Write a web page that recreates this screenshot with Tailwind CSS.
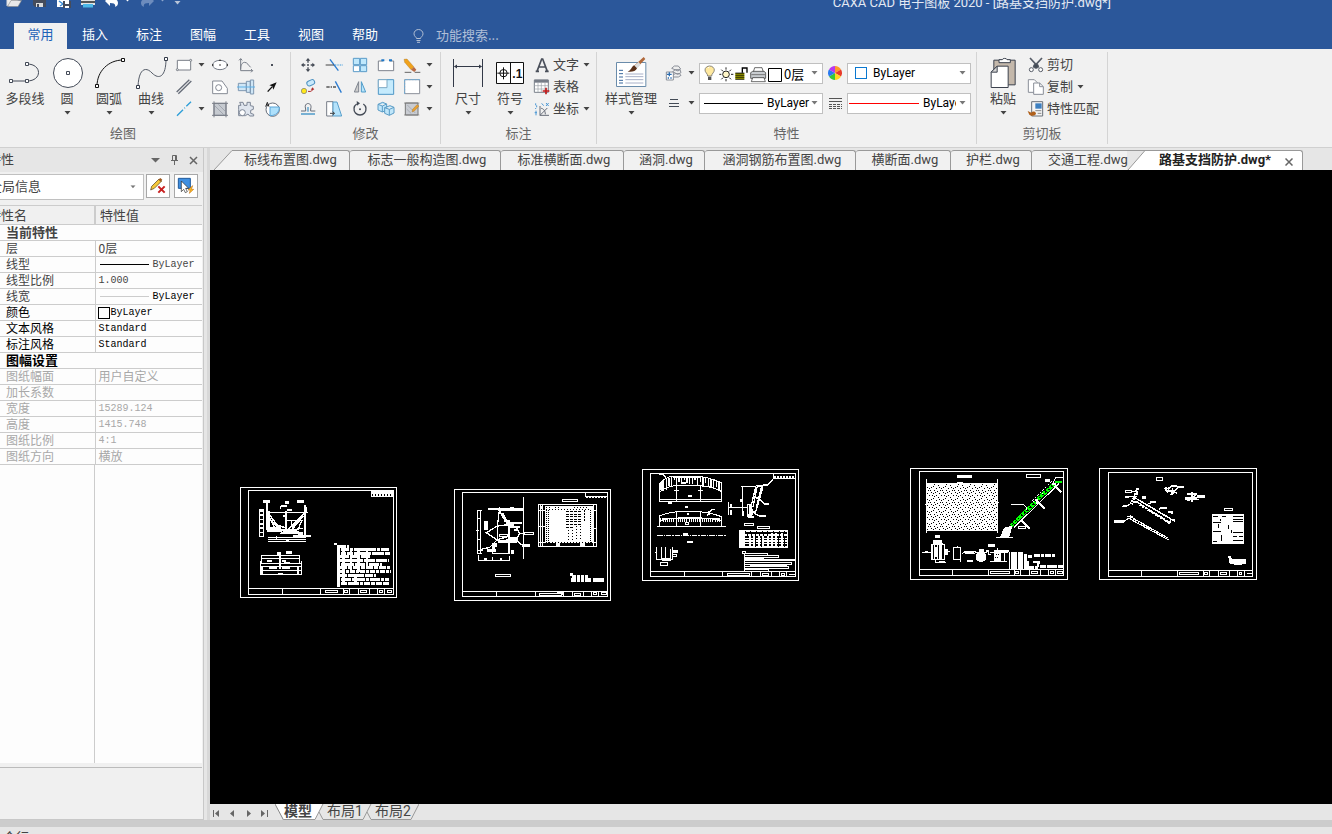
<!DOCTYPE html>
<html lang="zh-CN">
<head>
    <meta charset="UTF-8">
    <meta name="viewport" content="width=device-width, initial-scale=1.0">
    <title>CAXA CAD 电子图板 2020</title>
    <script src="https://cdn.jsdelivr.net/npm/@tailwindcss/browser@4"></script>
</head>
<body class="h-screen overflow-hidden bg-[#e6e6e6] font-['Noto_Sans_CJK_SC',sans-serif] text-[13px] text-[#444]">

<!-- Shared shapes -->
<svg class="absolute w-0 h-0" aria-hidden="true">
    <defs>
        <symbol id="caret" viewBox="0 0 7 4"><path d="M0.5 0h6L3.5 3.5z" fill="currentColor"/></symbol>
        <pattern id="mesh" width="36" height="36" patternUnits="userSpaceOnUse">
            <rect width="36" height="36" fill="#fff"/>
            <path d="M0 3h3v3h-3zM6 6h3v3h-3zM12 3h3v3h-3zM18 0h3v3h-3zM27 6h3v3h-3zM3 12h3v3h-3zM9 12h3v3h-3zM21 12h3v3h-3zM30 15h3v3h-3zM0 21h3v3h-3zM12 18h3v3h-3zM18 21h3v3h-3zM24 18h3v3h-3zM6 27h3v3h-3zM15 27h3v3h-3zM27 27h3v3h-3zM21 30h3v3h-3zM33 33h3v3h-3z" fill="#000"/>
        </pattern>
    </defs>
</svg>

<div class="flex flex-col h-screen overflow-hidden">

    <!-- Title bar and menu -->
    <header class="-mt-3 shrink-0 bg-[#2b579a] text-white">
        <div class="flex items-start h-8 pl-[6px]">
            <div class="flex items-center gap-2 pt-1">
                <button aria-label="打开"><svg class="w-4 h-4" viewBox="0 0 16 16"><path d="M1 14V3h5l1 2h6v3" fill="#eee" stroke="#ddd"/><path d="M1.500 14.500L5 8.500h10.500L12 14.500z" fill="#e8e8e8" stroke="#888" stroke-width=".6"/></svg></button>
                <button aria-label="保存"><svg class="w-4 h-4 ml-[2px]" viewBox="0 0 16 16"><path d="M1 1h13v14H3l-2-2z" fill="#454c5c"/><path d="M3 1h9v7H3z" fill="#fff"/><path d="M4 11h7v4H4z" fill="#ddd"/><path d="M5 12h2v3H5z" fill="#454c5c"/></svg></button>
                <button aria-label="另存为"><svg class="w-4 h-4" viewBox="0 0 16 16"><path d="M1 1h12v14H1z" fill="#fff"/><path d="M3 9l4 3-3 2" stroke="#3f8fd8" stroke-width="1.500" fill="none"/><path d="M7 9h8v7H7z" fill="#454c5c"/><path d="M9 9h4v3H9zM9 14h4v2H9z" fill="#fff"/></svg></button>
                <button aria-label="打印"><svg class="w-4 h-4" viewBox="0 0 16 16"><path d="M4 1h8v6H4z" fill="#fff"/><path d="M1 6h14v7H1z" fill="#e4e4e4"/><path d="M1 9h14v2H1z" fill="#555"/><path d="M3 12h10v3.500H3z" fill="#4db8e8"/></svg></button>
                <button aria-label="撤销"><svg class="w-4 h-4" viewBox="0 0 16 16"><path d="M1 9l5-5v3c5-1 8 1 8 4 0 2-1 3-3 4 1-3-1-4-5-4v3z" fill="#fff"/></svg></button>
                <svg class="w-[7px] h-1 -ml-1" viewBox="0 0 7 4"><use href="#caret"/></svg>
                <button aria-label="重做"><svg class="w-4 h-4" viewBox="0 0 16 16"><path d="M15 9l-5-5v3c-5-1-8 1-8 4 0 2 1 3 3 4-1-3 1-4 5-4v3z" fill="#6d8cbd"/></svg></button>
                <svg class="w-[7px] h-1 -ml-1 text-[#8ea6cc]" viewBox="0 0 7 4"><use href="#caret"/></svg>
                <svg class="w-[7px] h-1 mt-[6px] text-[#b8c4d8]" viewBox="0 0 7 4"><use href="#caret"/></svg>
            </div>
            <h1 class="ml-auto mr-[221px] leading-[30px] font-[Roboto,'Noto_Sans_CJK_SC',sans-serif] text-[#e3e9f3] whitespace-nowrap">CAXA CAD 电子图板 2020 - [路基支挡防护.dwg*]</h1>
        </div>
        <nav class="flex items-end h-[29px] pl-[14px]">
            <button class="w-[54px] h-[26px] bg-[#f1f1f1] text-[#1e62b8] border-r border-[#2b579a] pb-1">常用</button>
            <button class="w-[54px] h-[26px] pb-1">插入</button>
            <button class="w-[54px] h-[26px] pb-1">标注</button>
            <button class="w-[54px] h-[26px] pb-1">图幅</button>
            <button class="w-[54px] h-[26px] pb-1">工具</button>
            <button class="w-[54px] h-[26px] pb-1">视图</button>
            <button class="w-[54px] h-[26px] pb-1">帮助</button>
            <label for="search" class="flex items-center h-[26px] ml-[21px]">
                <svg class="w-[11px] h-[14px]" viewBox="0 0 11 14" fill="none" stroke="#b4c0d4"><path d="M3.500 9.500C3.500 8 1 7.500 1 4.800a4.500 4.300 0 0 1 9 0C10 7.500 7.500 8 7.500 9.500zM3.500 11.500h4M4 13.300h3"/></svg>
            </label>
            <input id="search" type="text" placeholder="功能搜索..." class="h-[26px] w-40 ml-3 pb-1 bg-transparent outline-none placeholder:text-[#b0bfd8]">
        </nav>
    </header>

    <!-- Ribbon -->
    <section class="flex shrink-0 h-[99px] py-[3px] -ml-11 bg-[#f1f1f1] border-b border-[#d0d0d0]">

        <div class="flex flex-col h-[92px] w-[335px] pl-12 shrink-0 border-r border-[#d4d4d4]">
            <div class="flex h-[71px]">
                <button class="flex flex-col items-center w-[42px] pt-[5px]">
                    <svg class="w-9 h-8" viewBox="24 171 108 96" fill="none" stroke="#444b58" stroke-width="3"><path d="M36 243h48c46 0 46-51 0-51"/><path d="M31.500 238.500h9v9h-9zM79.500 238.500h9v9h-9zM79.500 187.500h9v9h-9z" fill="#fff"/></svg>
                    <span class="leading-[18px] whitespace-nowrap">多段线</span>
                </button>
                <button class="flex flex-col items-center w-[42px] pt-[5px]">
                    <svg class="w-9 h-8" viewBox="147 171 108 96" fill="none" stroke="#444b58" stroke-width="3"><circle cx="204" cy="219" r="43.500" fill="#fff"/><path d="M199.500 214.500h9v9h-9z"/></svg>
                    <span class="leading-[18px]">圆</span>
                    <svg class="w-[7px] h-1 mt-1"><use href="#caret"/></svg>
                </button>
                <button class="flex flex-col items-center w-[42px] pt-[5px]">
                    <svg class="w-9 h-8" viewBox="273 171 108 96" fill="none" stroke="#111" stroke-width="3"><path d="M291 258c0-44 34-78 78-78"/><path d="M286.500 253.500h9v9h-9zM364.500 175.500h9v9h-9z" fill="#fff"/></svg>
                    <span class="leading-[18px]">圆弧</span>
                    <svg class="w-[7px] h-1 mt-1"><use href="#caret"/></svg>
                </button>
                <button class="flex flex-col items-center w-[42px] pt-[5px]">
                    <svg class="w-9 h-8" viewBox="399 171 108 96" fill="none" stroke="#555c68" stroke-width="3"><path d="M414 261c2-60 26-60 42-42 22 22 42 10 42-42"/><path d="M409.500 256.500h9v9h-9zM493.500 172.500h9v9h-9z" fill="#fff" stroke="#333a48"/></svg>
                    <span class="leading-[18px]">曲线</span>
                    <svg class="w-[7px] h-1 mt-1"><use href="#caret"/></svg>
                </button>
                <div class="grid grid-cols-[24px_11px_26px_26px_26px] auto-rows-[22px] place-items-center pt-[2px] content-start">
                    <button aria-label="矩形"><svg class="w-[18px] h-[18px]" viewBox="525 168 54 54" fill="#fff" stroke="#7a7f88" stroke-width="3"><path d="M532 181h40v29h-40z"/><circle cx="532" cy="209" r="3"/><circle cx="572" cy="181" r="3"/></svg></button>
                    <svg class="w-[7px] h-1"><use href="#caret"/></svg>
                    <button aria-label="椭圆"><svg class="w-[18px] h-[18px]" viewBox="630 168 54 54" fill="#fff" stroke="#777d88" stroke-width="3"><ellipse cx="657" cy="195" rx="22" ry="14"/><path d="M635 192v6M679 192v6M654 181h6M655 195h4" stroke="#444" stroke-width="4"/></svg></button>
                    <button aria-label="公式曲线"><svg class="w-[18px] h-[18px]" viewBox="708 168 54 54" fill="none" stroke="#777d88" stroke-width="3"><path d="M719 176v36h36M714 181l5-5 5 5M750 207l5 5-5 5M719 208c0-12 4-21 12-21s12 10 18 15"/></svg></button>
                    <button aria-label="点"><svg class="w-[18px] h-[18px]" viewBox="786 168 54 54"><path d="M810 192h6v6h-6z" fill="#4a4f5a"/></svg></button>

                    <button aria-label="平行线"><svg class="w-[18px] h-[18px]" viewBox="525 234 54 54" fill="none" stroke="#666c78" stroke-width="4"><path d="M530 276l38-37M535 281l39-38"/></svg></button>
                    <span></span>
                    <button aria-label="局部放大"><svg class="w-[18px] h-[18px]" viewBox="630 234 54 54" fill="#fff" stroke="#858a94" stroke-width="3"><path d="M635 243h28l16 22v16h-44z"/><circle cx="653" cy="263" r="9"/></svg></button>
                    <button aria-label="轴"><svg class="w-[18px] h-[18px]" viewBox="708 234 54 54" fill="#cfe6f6" stroke="#7f97b0" stroke-width="3"><path d="M712 250h24v22h-24zM736 244h12v33h-12zM748 240h10v42h-10z"/><path d="M708 261h54" stroke="#5ab0e8"/></svg></button>
                    <button aria-label="箭头"><svg class="w-[18px] h-[18px]" viewBox="786 234 54 54"><path d="M800 275l14-15" stroke="#111" stroke-width="4"/><path d="M827 247l-22 9 9 3 3 10z" fill="#111"/></svg></button>

                    <button aria-label="中心线"><svg class="w-[18px] h-[18px]" viewBox="525 300 54 54" stroke="#2f9fd8" stroke-width="4"><path d="M531 347l18-18M553 325l2-2M559 319l14-14"/></svg></button>
                    <svg class="w-[7px] h-1"><use href="#caret"/></svg>
                    <button aria-label="剖面线"><svg class="w-[18px] h-[18px]" viewBox="630 300 54 54" stroke="#7a7f88" stroke-width="3"><path d="M639 310h36v36h-36z" fill="#c6cad0"/><path d="M633 310h48M633 346h48M639 304v48M675 304v48"/><path d="M642 318l26 26M652 313l22 22" stroke="#8e949e" stroke-width="2"/></svg></button>
                    <button aria-label="齿形"><svg class="w-[18px] h-[18px]" viewBox="708 300 54 54" fill="#dfe5ee" stroke="#7d8696" stroke-width="3"><path d="M713 328v-12h7l-4-9h10l3 9h9v-9h10v10l9 2v9l-8 3v9l9 3v5h-12l-5-6-8 5h-20z"/><circle cx="724" cy="338" r="9" fill="#fff"/></svg></button>
                    <button aria-label="区域"><svg class="w-[18px] h-[18px]" viewBox="786 300 54 54" stroke="#666c78" stroke-width="3"><circle cx="815" cy="329" r="20" fill="#fff"/><path d="M807 321h28c0 16-10 26-28 26z" fill="#aee0fb" stroke="#5aa5d8"/><path d="M794 320l5-13 5 13M796 315h6" fill="none" stroke="#222"/></svg></button>
                </div>
            </div>
            <p class="-ml-12 text-center leading-5 text-[#666]">绘图</p>
        </div>

        <div class="flex flex-col h-[92px] w-[150px] pl-1 shrink-0 border-r border-[#d4d4d4]">
            <div class="h-[71px]">
                <div class="grid grid-cols-[26px_26px_26px_26px_26px_9px] auto-rows-[22px] place-items-center pt-[2px]">
                    <button aria-label="平移"><svg class="w-[18px] h-[18px]" viewBox="27 168 54 54" fill="#454b56"><path d="M54 174l7 8h-5v6h-4v-6h-5zM54 216l7-8h-5v-6h-4v6h-5zM33 195l8-7v5h5v4h-5v5zM75 195l-8-7v5h-5v4h5v5z"/><circle cx="54" cy="195" r="3"/></svg></button>
                    <button aria-label="裁剪"><svg class="w-[18px] h-[18px]" viewBox="105 168 54 54" fill="none" stroke-width="3"><path d="M120 178l25 34" stroke="#2b7bd0" stroke-width="4"/><path d="M107 195h25" stroke="#444"/><path d="M135 195h24" stroke="#3f9bdc" stroke-dasharray="3 2"/></svg></button>
                    <button aria-label="阵列"><svg class="w-[18px] h-[18px]" viewBox="183 168 54 54" stroke="#5a9bc8" stroke-width="3" fill="#bfe8fc"><path d="M190 175h19v19h-19zM211 175h19v19h-19zM211 197h19v18h-19z"/><path d="M190 197h19v18h-19z" fill="#fff"/></svg></button>
                    <button aria-label="打断"><svg class="w-[18px] h-[18px]" viewBox="261 168 54 54" stroke="#7d828c" stroke-width="3" fill="#fff"><path d="M280 183h-15v29h46v-29h-12"/><path d="M274 181h9M297 181h9" stroke="#1f78c8" stroke-width="6"/></svg></button>
                    <button aria-label="删除"><svg class="w-[18px] h-[18px]" viewBox="339 168 54 54"><path d="M342 178l9-1 21 24-9 8-19-22z" fill="#f0a21c" stroke="#9a6a20"/><path d="M372 201l7 8-6 7-10-7z" fill="#b86a45"/><path d="M344 217h20M374 217h17" stroke="#666" stroke-width="3"/></svg></button>
                    <svg class="w-[7px] h-1"><use href="#caret"/></svg>

                    <button aria-label="平移复制"><svg class="w-[18px] h-[18px]" viewBox="27 234 54 54" fill="none"><rect x="50" y="241" width="24" height="15" rx="7" transform="rotate(-25 62 248)" fill="#c9e9fb" stroke="#4a90c0" stroke-width="3"/><circle cx="42" cy="273" r="8" fill="#ffe71a" stroke="#777" stroke-width="2"/><path d="M54 274c10 2 14-2 14-8" stroke="#b03030" stroke-width="3"/><path d="M62 269l6-7 5 7z" fill="#b03030"/></svg></button>
                    <button aria-label="延伸"><svg class="w-[18px] h-[18px]" viewBox="105 234 54 54" fill="none" stroke-width="4"><path d="M109 261h10M122 261h4M129 261h9" stroke="#555"/><path d="M136 244l18 34" stroke="#2b7bd0"/></svg></button>
                    <button aria-label="镜像"><svg class="w-[18px] h-[18px]" viewBox="183 234 54 54" stroke-width="3"><path d="M206 245v31h-13z" fill="#ccc" stroke="#808690"/><path d="M214 245v31h13z" fill="#b8e4fa" stroke="#4f9cca"/></svg></button>
                    <button aria-label="缩放"><svg class="w-[18px] h-[18px]" viewBox="261 234 54 54" stroke-width="3"><path d="M265 239h46v44h-46z" fill="#c5ebfd" stroke="#4f97c6"/><path d="M265 239h26v24h-26z" fill="#fff" stroke="#7da9c4"/></svg></button>
                    <button aria-label="拉伸"><svg class="w-[18px] h-[18px]" viewBox="339 234 54 54"><path d="M344 239h45v42h-45z" fill="#fff" stroke="#8a8f98" stroke-width="3"/><path d="M344 281v-42h45" fill="none" stroke="#68aede" stroke-width="3" stroke-dasharray="6 3"/></svg></button>
                    <svg class="w-[7px] h-1"><use href="#caret"/></svg>

                    <button aria-label="等距线"><svg class="w-[18px] h-[18px]" viewBox="27 300 54 54" fill="none" stroke-width="3"><path d="M33 333h14v-6c-8-22 22-22 15 0v6h14" stroke="#666c78"/><path d="M33 342h42M54 321v14" stroke="#4f9bc9" stroke-width="4"/></svg></button>
                    <button aria-label="倒角"><svg class="w-[18px] h-[18px]" viewBox="105 300 54 54" stroke-width="3"><path d="M110 305h19v43h-19z" fill="#fff" stroke="#777d88"/><path d="M129 306h12l14 42h-26z" fill="#b5e3fb" stroke="#5aa0cc"/><path d="M120 340h12M128 335l6 5-6 5" fill="none" stroke="#444"/></svg></button>
                    <button aria-label="旋转"><svg class="w-[18px] h-[18px]" viewBox="183 300 54 54" fill="none" stroke="#444b56" stroke-width="4"><path d="M220 312a18 18 0 1 1-20 0"/><path d="M200 303l10 7-9 7z" fill="#444b56" stroke="none"/><circle cx="210" cy="328" r="3" fill="#444b56" stroke="none"/></svg></button>
                    <button aria-label="三维"><svg class="w-[18px] h-[18px]" viewBox="261 300 54 54" fill="#bfe6fa" stroke="#5a9cc6" stroke-width="3"><path d="M264 313l14-6 12 5v18l-13 6-13-6zM264 313l13 5 13-6M277 318v18"/><path d="M284 323l16-6 12 5v17l-14 7-14-6zM284 323l14 5 14-6M298 328v18"/></svg></button>
                    <button aria-label="编辑填充"><svg class="w-[18px] h-[18px]" viewBox="339 300 54 54"><path d="M346 309h38v36h-38z" fill="#c9ccd2" stroke="#777" stroke-width="3"/><path d="M342 309h46M342 345h46" stroke="#777" stroke-width="2"/><path d="M352 315l24 24M350 327l14 14" stroke="#9a9fa8" stroke-width="2"/><path d="M387 318l-14 15-7 3 2-8 13-14z" fill="#e8a030" stroke="#9a6a20"/></svg></button>
                    <svg class="w-[7px] h-1"><use href="#caret"/></svg>
                </div>
            </div>
            <p class="-ml-1 text-center leading-5 text-[#666]">修改</p>
        </div>

        <div class="flex flex-col h-[92px] w-[156px] pl-[6px] shrink-0 border-r border-[#d4d4d4]">
            <div class="flex h-[71px]">
                <button class="flex flex-col items-center w-[42px] pt-[5px]">
                    <svg class="w-9 h-8" viewBox="480 171 108 96" fill="none" stroke="#333a48" stroke-width="3"><path d="M490.500 177v84M577.500 177v84M494 199.500h80"/><path d="M492 199.500l9-6v12zM576 199.500l-9-6v12z" fill="#333a48" stroke="none"/></svg>
                    <span class="leading-[18px]">尺寸</span>
                    <svg class="w-[7px] h-1 mt-1"><use href="#caret"/></svg>
                </button>
                <button class="flex flex-col items-center w-[42px] pt-[5px]">
                    <svg class="w-9 h-8" viewBox="606 171 108 96" fill="none" stroke="#111" stroke-width="3"><path d="M619.500 187.500h81v63h-81z" fill="#fff"/><path d="M661.500 187v63"/><circle cx="640.500" cy="219.500" r="11"/><path d="M640.500 202v36M622 219.500h36"/><text x="667" y="234" font-size="36" font-weight="bold" font-family="Liberation Sans, sans-serif" fill="#111" stroke="none">.1</text></svg>
                    <span class="leading-[18px]">符号</span>
                    <svg class="w-[7px] h-1 mt-1"><use href="#caret"/></svg>
                </button>
                <div class="grid auto-rows-[22px] content-start pt-[2px] pl-[2px]">
                    <button class="flex items-center gap-[2px]">
                        <svg class="w-[18px] h-[18px]" viewBox="729 168 54 54" fill="none" stroke="#4a4f5a" stroke-width="5"><path d="M741 214l14-37h3l14 37M746 201h21M737 214h10M765 214h11"/></svg>
                        <span class="pb-[2px]">文字</span><svg class="w-[7px] h-1 ml-[2px]"><use href="#caret"/></svg>
                    </button>
                    <button class="flex items-center gap-[2px]">
                        <svg class="w-[18px] h-[18px]" viewBox="729 234 54 54"><path d="M733 240h42v37h-42z" fill="#fff" stroke="#7a808a" stroke-width="3"/><path d="M733 239h42v9h-42z" fill="#777d88"/><path d="M733 257h42M733 267h42M744 248v29M754 248v29M765 248v29" stroke="#9aa0a8" stroke-width="2"/><path d="M768 263v20M758 273h20" stroke="#c01818" stroke-width="5"/></svg>
                        <span class="pb-[2px]">表格</span>
                    </button>
                    <button class="flex items-center gap-[2px]">
                        <svg class="w-[18px] h-[18px]" viewBox="729 300 54 54" fill="none" stroke="#666c78" stroke-width="3"><path d="M750 318v28h27M750 346l22-22M753 325c6 0 13 6 13 18"/><path d="M737 310v6M740 316v6M737 324v3M738 332v14M734 338h7M755 310l6 7M768 309l8 9M776 309l-8 9" stroke="#4b97d4"/></svg>
                        <span class="pb-[2px]">坐标</span><svg class="w-[7px] h-1 ml-[2px]"><use href="#caret"/></svg>
                    </button>
                </div>
            </div>
            <p class="-ml-[6px] text-center leading-5 text-[#666]">标注</p>
        </div>

        <div class="flex flex-col h-[92px] w-[380px] shrink-0 border-r border-[#d4d4d4]">
            <div class="flex h-[71px] pl-[7px]">
                <button class="flex flex-col items-center w-[54px] pt-[5px]">
                    <svg class="w-9 h-8" viewBox="51 27 108 96"><path d="M61.500 43.500h88v72h-88z" fill="#fff" stroke="#6a8cab" stroke-width="3"/><path d="M69 67h12M69 77h12M69 87h12M69 97h12M69 105h12" stroke="#38679c" stroke-width="3"/><path d="M88 78h54M88 86h54M88 95h54M88 105h54" stroke="#a8b0c8" stroke-width="3"/><path d="M143 27l5 6-26 27-8-7z" fill="#b0683a"/><path d="M128 42l6 8-12 12-8-8z" fill="#ddd"/><path d="M114 52l9 9c-3 9-16 12-28 10 10-3 11-14 19-19z" fill="#5a3018"/></svg>
                    <span class="leading-[18px] whitespace-nowrap">样式管理</span>
                    <svg class="w-[7px] h-1 mt-1"><use href="#caret"/></svg>
                </button>
                <div class="grid grid-cols-[18px_16px_124px_24px_124px] auto-rows-[30px] items-center justify-items-center content-start pt-[6px] pl-[7px]">
                    <button aria-label="图层"><svg class="w-[18px] h-[18px]" viewBox="213 49 54 54" fill="#eee" stroke="#8a8f98" stroke-width="3"><path d="M233 62l8-7h12l7 9-8 6zM236 72l8-6h14l3 9-10 5zM236 82l8-4h12l5 5-8 5h-15z"/><path d="M217 73h21v24h-21z" fill="#fff"/><path d="M219 80h14M226 74v12M221 91h4M229 91h4" stroke="#2b6cb0" stroke-width="4"/></svg></button>
                    <svg class="w-[7px] h-1"><use href="#caret"/></svg>
                    <div class="flex items-center w-full h-[21px] bg-white border border-[#c0c0c0] text-black relative">
                        <svg class="w-[84px] h-[19px] shrink-0" viewBox="312 48 252 57" fill="none" stroke="#222" stroke-width="3">
                            <path d="M335 84c0-8-8-10-8-18a14 12 0 0 1 28 0c0 8-8 10-8 18z" fill="#ffe9a0" stroke="#555" stroke-width="2"/><path d="M336 86h10v10h-10z" fill="#555" stroke="none"/><path d="M336 60l4-3" stroke="#fff"/>
                            <circle cx="390" cy="79" r="10" fill="#fff6c8"/><path d="M390 58v7M390 93v7M370 79h6M405 79h7M376 65l5 5M400 89l5 5M405 65l-5 5M381 89l-5 5"/>
                            <path d="M418 75h27v19h-27z" fill="#c8c800" stroke="none"/><path d="M418 75.500h27M418 81.500h27M418 87.500h27M418 93.500h27" stroke="#000"/><path d="M439 74v-14h14v14" stroke="#000" stroke-width="4"/>
                            <path d="M472 72l4-13h22l4 13" fill="#fff" stroke-width="2"/><path d="M464 74l6-4h34l5 4v17h-45z" fill="#c8ccd0" stroke-width="2"/><path d="M470 89h34l4 12h-42z" fill="#fff" stroke-width="2"/><path d="M466 80h42" stroke="#777"/>
                            <path d="M517.500 61.500h39v39h-39z" fill="#fff" stroke="#000"/>
                        </svg>
                        <select aria-label="当前图层" class="appearance-none flex-1 min-w-0 h-full bg-transparent outline-none text-[13px]"><option>0层</option></select>
                        <svg class="w-[7px] h-1 absolute right-1 text-[#777]"><use href="#caret"/></svg>
                    </div>
                    <button aria-label="颜色">
                        <svg class="w-[14px] h-[14px]" viewBox="-7 -7 14 14"><path d="M0 0V-7A7 7 0 0 1 6 -3.500z" fill="#ff9a2a"/><path d="M0 0L6-3.500A7 7 0 0 1 6 3.500z" fill="#e83a2a"/><path d="M0 0L6 3.500A7 7 0 0 1 0 7z" fill="#ffd820"/><path d="M0 0V7A7 7 0 0 1-6 3.500z" fill="#38c838"/><path d="M0 0L-6 3.500A7 7 0 0 1-6-3.500z" fill="#2a7af0"/><path d="M0 0L-6-3.500A7 7 0 0 1 0-7z" fill="#b838f0"/></svg>
                    </button>
                    <div class="flex items-center w-full h-[21px] bg-white border border-[#c0c0c0] text-black relative">
                        <span class="w-3 h-3 ml-[7px] border border-[#0a78d0] shrink-0"></span>
                        <select aria-label="颜色" class="appearance-none flex-1 min-w-0 h-full ml-[6px] bg-transparent outline-none font-[Roboto,sans-serif] text-[12px]"><option>ByLayer</option></select>
                        <svg class="w-[7px] h-1 absolute right-1 text-[#777]"><use href="#caret"/></svg>
                    </div>

                    <button aria-label="线型"><svg class="w-[10px] h-[10px]" viewBox="0 0 10 10" stroke="#444b56"><path d="M1 1.500h8M0 5.500h10M0 8.500h10"/></svg></button>
                    <svg class="w-[7px] h-1"><use href="#caret"/></svg>
                    <div class="flex items-center w-full h-[21px] bg-white border border-[#c0c0c0] text-black relative">
                        <span class="w-[59px] h-px ml-1 bg-black shrink-0"></span>
                        <select aria-label="线型" class="appearance-none flex-1 min-w-0 h-full ml-1 bg-transparent outline-none font-[Roboto,sans-serif] text-[12px]"><option>ByLayer</option></select>
                        <svg class="w-[7px] h-1 absolute right-1 text-[#777]"><use href="#caret"/></svg>
                    </div>
                    <button aria-label="线宽"><svg class="w-[13px] h-[11px]" viewBox="0 0 13 11" stroke="#555"><path d="M0 .5h13M0 3.500h13"/><path d="M0 6.500h13M0 8.500h13M0 10.500h13" stroke-dasharray="3 1"/></svg></button>
                    <div class="flex items-center w-full h-[21px] bg-white border border-[#c0c0c0] text-black relative">
                        <span class="w-[70px] h-px ml-px bg-[#f00] shrink-0"></span>
                        <select aria-label="线宽" class="appearance-none w-[33px] h-full ml-1 bg-transparent outline-none overflow-hidden font-[Roboto,sans-serif] text-[12px]"><option>ByLayer</option></select>
                        <svg class="w-[7px] h-1 absolute right-1 text-[#777]"><use href="#caret"/></svg>
                    </div>
                </div>
            </div>
            <p class="text-center leading-5 text-[#666]">特性</p>
        </div>

        <div class="flex flex-col h-[92px] w-[131px] shrink-0 border-r border-[#d4d4d4]">
            <div class="flex h-[71px] pl-[5px]">
                <button class="flex flex-col items-center w-[42px] pt-[5px]">
                    <svg class="w-9 h-8" viewBox="436 171 108 96" stroke="#3c424e" stroke-width="3"><path d="M462.500 180.500h64v74h-64z" fill="#c4b8ab"/><path d="M478 188v-9h10c0-5 14-5 14 0h10v9z" fill="#fff"/><path d="M454.500 216.500l18-18h33v64h-51z" fill="#fff"/><path d="M454.500 216.500h18v-18z" fill="#d8d8d8"/></svg>
                    <span class="leading-[18px]">粘贴</span>
                    <svg class="w-[7px] h-1 mt-1"><use href="#caret"/></svg>
                </button>
                <div class="grid auto-rows-[22px] content-start justify-items-start pt-[2px] pl-[3px]">
                    <button class="flex items-center gap-[2px]">
                        <svg class="w-[18px] h-[18px]" viewBox="561 168 54 54" fill="none" stroke="#555b66" stroke-width="3"><path d="M570 174l26 28M606 174l-26 28" stroke-width="5"/><circle cx="574" cy="209" r="6" fill="#fff"/><circle cx="602" cy="209" r="6" fill="#fff"/><circle cx="588" cy="198" r="7" fill="#444b56"/></svg>
                        <span class="pb-[2px]">剪切</span>
                    </button>
                    <button class="flex items-center gap-[2px]">
                        <svg class="w-[18px] h-[18px]" viewBox="561 234 54 54" fill="#fff" stroke="#8a8f98" stroke-width="3"><path d="M565 239h18l9 9v29h-27z"/><path d="M581 249h18l11 11v23h-29z"/><path d="M599 249v11h11" fill="none"/></svg>
                        <span class="pb-[2px]">复制</span><svg class="w-[7px] h-1 ml-[2px]"><use href="#caret"/></svg>
                    </button>
                    <button class="flex items-center gap-[2px]">
                        <svg class="w-[18px] h-[18px]" viewBox="561 300 54 54"><path d="M575 305h33v43h-33z" fill="#f4f4f4" stroke="#6a7078" stroke-width="3"/><path d="M586 310h19v16h-19z" fill="#3d7fc0"/><path d="M586 332h18M593 340h11" stroke="#888" stroke-width="3"/><path d="M563 333l11 5c4-5 12-4 14 2 0 8-12 10-20 4z" fill="#b0601c"/></svg>
                        <span class="pb-[2px]">特性匹配</span>
                    </button>
                </div>
            </div>
            <p class="text-center leading-5 text-[#666]">剪切板</p>
        </div>
    </section>

    <main class="flex flex-1 min-h-0">

        <!-- Properties panel -->
        <aside class="flex flex-col w-[216px] -ml-3 shrink-0 bg-[#f0f0f0] border-r border-b border-[#c8c8c8]">
            <div class="flex items-center h-6 bg-[#e6e6e6]">
                <h2 class="mr-auto pb-[2px]">特性</h2>
                <button aria-label="菜单" class="mr-[10px]"><svg class="w-[9px] h-[5px]" viewBox="0 0 9 5"><path d="M0 0h9L4.500 4.500z" fill="#666"/></svg></button>
                <button aria-label="固定" class="mr-[10px]"><svg class="w-[9px] h-[10px]" viewBox="0 0 9 10" fill="none" stroke="#666"><path d="M2.500 5.500v-5h4v5M5.500 1v4M1 5.500h7M4.500 6v4"/></svg></button>
                <button aria-label="关闭" class="mr-[5px]"><svg class="w-[9px] h-[9px]" viewBox="0 0 9 9" stroke="#666" stroke-width="1.500"><path d="M1 1l7 7M8 1l-7 7"/></svg></button>
            </div>
            <div class="flex gap-[2px] pt-[2px] pb-1">
                <div class="relative flex items-center w-[156px] h-[26px] bg-white border border-[#c0c0c0]">
                    <select aria-label="选择对象" class="appearance-none w-full h-full pb-[2px] bg-transparent outline-none"><option>全局信息</option></select>
                    <svg class="w-[6px] h-1 absolute right-[7px] text-[#777]" viewBox="0 0 7 4"><use href="#caret"/></svg>
                </div>
                <button aria-label="清除选择" class="w-6 h-6 bg-white border border-[#a8a8a8]"><svg class="w-[22px] h-[22px]" viewBox="441 90 66 66"><path d="M452 135l3-11 22-22 8 6-22 22z" fill="#f5c83a" stroke="#4a3a18" stroke-width="2"/><path d="M475 104l6-5 6 5-5 6z" fill="#a05a20"/><path d="M475 124l19 19M494 124l-19 19" stroke="#c82020" stroke-width="6"/></svg></button>
                <button aria-label="快速选择" class="w-6 h-6 ml-[2px] bg-white border border-[#a8a8a8]"><svg class="w-[22px] h-[22px]" viewBox="525 90 66 66"><path d="M535 100h36v30h-36z" fill="#3f8fe0" stroke="#1f5a9c" stroke-width="3"/><path d="M544 108v32l7-7 5 10 6-3-5-10h9z" fill="#fff" stroke="#222" stroke-width="2"/><path d="M578 122l-14 13h7l-3 10 13-12h-7z" fill="#ffc020" stroke="#c87818" stroke-width="2"/></svg></button>
            </div>

            <div class="flex flex-col flex-1 min-h-0 mt-px mr-px bg-[#fdfdfd]">
                <table class="w-full table-fixed border-collapse text-[12px] leading-[13px] border-t border-[#ccc]">
                    <colgroup><col class="w-[107px]"><col></colgroup>
                    <thead>
                        <tr class="h-[19px] bg-[#f0f0f0] text-[13px] text-left border-b border-[#ccc]"><th class="font-normal pb-[2px] border-r-2 border-[#ccc]">特性名</th><th class="font-normal pl-1 pb-[2px]">特性值</th></tr>
                    </thead>
                    <tbody class="[&_tr]:h-4 [&_tr]:border-b [&_tr]:border-[#ccc] [&_th]:pl-[18px] [&_th]:pb-[2px] [&_th]:text-left [&_th]:font-normal [&_th]:border-r [&_th]:border-[#ccc] [&_td]:pl-[3px]">
                        <tr><td colspan="2" class="pb-[2px] text-[13px] font-bold"><span class="ml-[15px]">当前特性</span></td></tr>
                        <tr><th>层</th><td class="pb-[2px]">0层</td></tr>
                        <tr><th>线型</th><td><div class="flex items-center gap-1 font-['Liberation_Mono',monospace] text-[10px]"><span class="w-[49px] h-px bg-black ml-px"></span>ByLayer</div></td></tr>
                        <tr><th>线型比例</th><td class="font-['Liberation_Mono',monospace] text-[10px]">1.000</td></tr>
                        <tr><th>线宽</th><td><div class="flex items-center gap-1 font-['Liberation_Mono',monospace] text-[10px] text-black"><span class="w-[49px] h-px bg-[#ccc] ml-px"></span>ByLayer</div></td></tr>
                        <tr class="text-black"><th>颜色</th><td><div class="flex items-center gap-px -ml-px font-['Liberation_Mono',monospace] text-[10px]"><span class="w-3 h-3 border border-black"></span>ByLayer</div></td></tr>
                        <tr class="text-black"><th>文本风格</th><td class="font-['Liberation_Mono',monospace] text-[10px]">Standard</td></tr>
                        <tr class="text-black"><th>标注风格</th><td class="font-['Liberation_Mono',monospace] text-[10px]">Standard</td></tr>
                        <tr class="text-black"><td colspan="2" class="pb-[2px] text-[13px] font-bold"><span class="ml-[15px]">图幅设置</span></td></tr>
                        <tr class="text-[#a8a8a8]"><th>图纸幅面</th><td class="pb-[2px]">用户自定义</td></tr>
                        <tr class="text-[#a8a8a8]"><th>加长系数</th><td></td></tr>
                        <tr class="text-[#a8a8a8]"><th>宽度</th><td class="font-['Liberation_Mono',monospace] text-[10px]">15289.124</td></tr>
                        <tr class="text-[#a8a8a8]"><th>高度</th><td class="font-['Liberation_Mono',monospace] text-[10px]">1415.748</td></tr>
                        <tr class="text-[#a8a8a8]"><th>图纸比例</th><td class="font-['Liberation_Mono',monospace] text-[10px]">4:1</td></tr>
                        <tr class="text-[#a8a8a8]"><th>图纸方向</th><td class="pb-[2px]">横放</td></tr>
                    </tbody>
                </table>
                <div class="flex-1 w-[107px] border-r border-[#ccc]"></div>
            </div>
            <div class="h-[56px] pt-1 mr-px shrink-0"><div class="border-t border-[#bbb]"></div></div>
        </aside>
        <div class="w-[6px] shrink-0 border-r-[3px] border-l-2 border-l-[#e6e6e6] border-r-[#d8d8d8]"></div>

        <!-- Drawing area -->
        <section class="flex flex-col flex-1 min-w-0">
            <nav class="flex items-end h-[22px] pl-1 shrink-0 text-center whitespace-nowrap leading-[17px] font-[Roboto,'Noto_Sans_CJK_SC',sans-serif]">
                <svg class="w-[18px] h-5 shrink-0" viewBox="0 0 18 20"><path d="M0 20L18 .5V20z" fill="#f1f1f1"/><path d="M0 20L18 .5" stroke="#999"/></svg>
                <button class="w-[118px] h-5 pb-[2px] shrink-0 bg-[#f1f1f1] border-t border-r border-[#999] rounded-tr-[3px]">标线布置图.dwg</button>
                <button class="w-[151px] h-5 pb-[2px] pl-1 shrink-0 bg-[#f1f1f1] border-t border-r border-[#999] rounded-t-[3px]">标志一般构造图.dwg</button>
                <button class="w-[123px] h-5 pb-[2px] pl-1 shrink-0 bg-[#f1f1f1] border-t border-r border-[#999] rounded-t-[3px]">标准横断面.dwg</button>
                <button class="w-[81px] h-5 pb-[2px] pl-1 shrink-0 bg-[#f1f1f1] border-t border-r border-[#999] rounded-t-[3px]">涵洞.dwg</button>
                <button class="w-[151px] h-5 pb-[2px] pl-1 shrink-0 bg-[#f1f1f1] border-t border-r border-[#999] rounded-t-[3px]">涵洞钢筋布置图.dwg</button>
                <button class="w-[95px] h-5 pb-[2px] pl-1 shrink-0 bg-[#f1f1f1] border-t border-r border-[#999] rounded-t-[3px]">横断面.dwg</button>
                <button class="w-[81px] h-5 pb-[2px] pl-1 shrink-0 bg-[#f1f1f1] border-t border-r border-[#999] rounded-t-[3px]">护栏.dwg</button>
                <button class="w-[95px] h-5 pb-[2px] pl-4 shrink-0 bg-[#f1f1f1] border-t border-[#999] rounded-tl-[3px] text-left">交通工程.dwg</button>
                <svg class="w-[18px] h-5 shrink-0" viewBox="0 0 18 20"><path d="M1 20L18 .5V20z" fill="#fff"/><path d="M0 .5h18L1 20" fill="none" stroke="#999"/></svg>
                <button class="w-[139px] h-5 pb-[2px] pl-[14px] shrink-0 bg-white border-t border-[#999] text-left font-bold text-[#222]">路基支挡防护.dwg*</button>
                <button aria-label="关闭标签" class="w-[19px] h-5 shrink-0 bg-white border-t border-r border-[#999] rounded-tr-[3px]"><svg class="w-2 h-2 mr-2 inline" viewBox="0 0 8 8" stroke="#666" stroke-width="1.500"><path d="M.5.5l7 7M7.500.5l-7 7"/></svg></button>
            </nav>

            <div class="relative flex-1 bg-black overflow-hidden">
                <!-- Sheet 1 -->
                <svg class="absolute left-[20px] top-[310px] w-[175px] h-[125px]" viewBox="0 0 525 375" fill="none" stroke="#fff" stroke-width="3" shape-rendering="crispEdges">
                    <path d="M31.500 22.500h468v330h-468zM55.500 31.500h435v312h-435zM55 325.500h435M157.500 325v18M271.500 325v18M340.500 325v18M358.500 325v18M385.500 325v18M418.500 325v18M442.500 325v18M463.500 325v18"/>
                    <path d="M286.500 331.500h36v6h-36zM343.500 331.500h9v6h-9zM391.500 331.500h18v6h-18zM448.500 331.500h9v6h-9zM472.500 331.500h12v6h-12z"/>
                    <path d="M424.500 33v15h65v-15" fill="#fff"/><path d="M427 45h60" stroke="#000" stroke-width="6" stroke-dasharray="3 6"/>
                    <path d="M88.500 88.500h12v81h-12z"/><path d="M94.500 90v78" stroke-width="9" stroke-dasharray="5 8"/>
                    <path d="M99 65h21M200 65h21M165 67h12" stroke-width="8"/><path d="M112 70v80M226 76v92M229 80v20" stroke-width="6"/><path d="M117 94v60" stroke-width="5"/>
                    <path d="M168 94v60" stroke-width="6"/><path d="M118 97.500h115M150 88c2-14 10-12 20-12M160 108h8M168 121.500h52M172 90h14" stroke-width="4"/><path d="M152 78h18M171 90h16" stroke-width="6"/>
                    <path d="M118 104l30 40M118 110l14 30M224 98l-56 56M220 108l-34 34M210 120l-25 30M214 124l-10 26M124 120l20 24" stroke-width="4"/><path d="M185 121h10v14h-10z"/>
                    <path d="M108 143h46M115 155l18-14 26 18 30-4 38 14M135 133l30 10M150 149h50M150 160h70M180 150l40 10M200 145h20M120 148h60" stroke-width="5"/><path d="M190 168h53M112 152h40M160 155h30" stroke-width="6"/>
                    <path d="M114 172.500h114M114 178.500h114M114 184.500h114M139.500 168v8"/><path d="M168 181h9"/>
                    <path d="M94.500 228v20M208.500 228v20M94 226.500h115M94 235.500h115M91.500 244v40h123v-40M90 250.500h124M90 259.500h124M90 271.500h124"/><path d="M141 220h12M168 217h18" stroke-width="9"/>
                    <path d="M94 262v22M204 262v22M150 228v40" stroke-width="8"/><path d="M112 243h14M118 264h24M162 248h18M155 264h24M145 281h14M155 243h12" stroke-width="6"/>
                    <path d="M312 192h9" stroke-width="6"/>
                    <g stroke-width="9"><path d="M322 200h36M332 208h148" stroke-dasharray="26 2 9 3"/><path d="M334 219h146" stroke-dasharray="14 2 20 2"/><path d="M330 230h94" stroke-dasharray="28 3"/><path d="M330 241h146" stroke-dasharray="20 2 12 2"/><path d="M332 252h126" stroke-dasharray="32 2 6 2"/><path d="M330 262h150" stroke-dasharray="22 2 13 2"/><path d="M330 273h153" stroke-dasharray="16 2 9 3"/><path d="M327 286h110" stroke-dasharray="24 2"/><path d="M332 298h144" stroke-dasharray="30 3 9 2"/><path d="M332 310h144" stroke-dasharray="19 3 11 2"/></g>
                    <path d="M325 196v124" stroke-width="8"/><path d="M340 205v110M362 205v75M385 205v70M410 205v60M376 290v20" stroke-width="7"/>
                </svg>

                <!-- Sheet 2 -->
                <svg class="absolute left-[235px] top-[310px] w-[175px] h-[125px]" viewBox="0 0 525 375" fill="none" stroke="#fff" stroke-width="3" shape-rendering="crispEdges">
                    <path d="M28.500 28.500h468v333h-468zM52.500 37.500h435v312h-435zM52 334.500h435M154.500 334v15M271.500 334v15M355.500 334v15M382.500 334v15M415.500 334v15M439.500 334v15M460.500 334v15"/>
                    <path d="M283.500 340.500h66v6h-66zM388.500 340.500h18v6h-18zM445.500 337.500h9v6h-9zM469.500 337.500h15v6h-15zM336 337.500h15v6"/>
                    <path d="M421.500 38v10h66"/><path d="M424 51h64" stroke-width="6" stroke-dasharray="6 3"/>
                    <path d="M351.500 58.500h47v6h-47zM151.500 283.500h46v6h-46z"/>
                    <path d="M280.500 73.500h174v126h-174zM286.500 73v126M292.500 73v126M445.500 73v126M281 91.500h173M281 187.500h173M281 139.500h20M445 145.500h9"/>
                    <path d="M300 78h144v111h-144z" fill="#fff" stroke="none"/>
                    <path d="M303 88.500h140M303 187.500h140" stroke="#000" stroke-dasharray="3 6"/><path d="M303 82.500h12M330 82.500h14M388 82.500h45" stroke="#000" stroke-dasharray="3 6"/>
                    <g stroke="#000"><path d="M304.500 90v98M310.500 90v98M436.500 90v98" stroke-dasharray="3 3"/><path d="M418.500 90v36" stroke-dasharray="6 3"/><path d="M363 94.500h46M363 103.500h46M363 109.500h46M363 118.500h46M363 124.500h46M363 133.500h46M363 142.500h24" stroke-dasharray="9 3"/><path d="M370.500 151v33M382.500 151v33M394.500 138v46M406.500 138v46" stroke-dasharray="3 6"/></g>
                    <path d="M289 78v10M442 80v12M332 194h14M405 194h16" stroke-width="9"/>
                    <path d="M235.500 52v185"/><path d="M112 91.500h-14v129h14M98 115.500h8M98 178.500h8M94 151.500h8M105 90v130M98 211.500h16"/>
                    <path d="M124 123v28" stroke-width="12"/><path d="M130 87h106M162 92h74" stroke-width="4"/><path d="M196 86h10" stroke-width="9"/>
                    <g stroke-width="4"><path d="M163 80v10l12 24 12 18M163 92l-6 46-33 20 30 20M157 138l32-4 26 8 8 18-8 20-30 4-31-2-20 20-26 6M157 138v44M192 134v60M225 160h14M215 180l12 14h26M154 180l34-10M142 206v14h50v-26"/></g><path d="M163.500 163.500h24v6h-24z"/>
                    <path d="M180 116l6 14h44M172 100l12 24M190 140h34M178 124h18M160 84l6 12M206 150h14" stroke-width="6"/><path d="M182 133h24M182 183h34M142 196h14" stroke-width="12"/><path d="M160 184h26M230 197h24M126 212h26M146 190v18M196 176h20" stroke-width="8"/><path d="M202 209v12" stroke-width="9"/>
                    <path d="M238.500 157.500h28v6h-28z"/>
                    <path d="M100.500 225v16h93v-13M142.500 232v8"/><path d="M117 237h9M165 237h6" stroke-width="6"/>
                    <path d="M375 283h9M382 294v12M387 286v20M400 286v20M412 286v20M425 286v20M434 294v12M444 300h32" stroke-width="10"/>
                </svg>

                <!-- Sheet 3 -->
                <svg class="absolute left-[425px] top-[292px] w-[175px] h-[125px]" viewBox="0 0 525 375" fill="none" stroke="#fff" stroke-width="3" shape-rendering="crispEdges">
                    <path d="M22.500 22.500h468v333h-468zM46.500 34.500h435v309h-435zM46 328.500h435M148.500 328v15M262.500 328v15M349.500 328v15M376.500 328v15M409.500 328v15M433.500 328v15M454.500 328v15"/>
                    <path d="M277.500 334.500h66v6h-66zM382.500 334.500h18v6h-18zM439.500 334.500h9v6h-9zM463 336h16M330 334h14"/>
                    <path d="M415.500 34v14h65"/><path d="M418 45h62" stroke-width="6" stroke-dasharray="6 3"/>
                    <path d="M73.500 66c10-14 24-22 42-23h74c20 2 50 10 71 20v55.500H73.500zM73 112.500h187M73 90c16-12 34-18 50-19.500h74c22 2 44 8 63 18M124.500 70v48M196.500 70v48M118 85.500h14M190 85.500h14"/>
                    <g stroke-width="4"><path d="M78 60v24M84 56v30M94 50v34M102 48v24M110 44v30M118 43v10M124 43v26M132 43v18M140 43v24M148 43v10M156 43v20M164 43v24M172 43v24M180 43v10M188 43v26M196 45v16M204 46v28M212 48v14M220 50v26M228 52v24M236 55v24M244 58v18M252 60v26"/><path d="M74 62h14M114 45h80"/></g>
                    <path d="M72 38h14l8 12" stroke-width="4"/><path d="M98 122h12M150 136h10M160 102h12M155 156h8" stroke-width="6"/><path d="M140 63h14" stroke-width="5"/>
                    <path d="M73.500 194v-32c14-7 30-10 50-12.500h74c22 3 46 8 63 15v30M67 194.500h205M124.500 149v45M196.500 149v45M74 176c40-12 140-12 186 0"/><path d="M76 174h184" stroke-width="12" stroke-dasharray="3 4 3 3"/><path d="M80 168h176M73 192h187"/>
                    <path d="M216 160l14-18h10M222 148v12" stroke-width="4"/><path d="M151.500 181.500h9v6h-9z"/><path d="M67 220.500h205" stroke-dasharray="16 3 4 3"/><path d="M145 216h14M156 241h18" stroke-width="6"/>
                    <path d="M64.500 255v36h48v-36M79.500 255v36M91.500 255v36M106.500 262v28M60 272h6"/><path d="M114 268h14M80 292h28" stroke-width="7"/><path d="M112.500 277.500h12v6h-12zM76.500 301.500h21v9h-21z"/>
                    <path d="M318 73.500h45M322.500 73v87M280.500 121v38M280 136.500h55"/><path d="M325 148v14M318 111v8M288 127v12M288 144v14" stroke-width="6"/>
                    <path d="M362 76l-22 90M366 74l-12 60M380 74l-16 64M384 74l-22 76M364 70h34l16-18M370 108l18 18h12M352 150l24 14h16M338 128h10v36h-10z" stroke-width="4"/><path d="M396 68l-30 6" stroke-width="6"/><path d="M345 130v34M350 150h12M338 164h18M352 140v20" stroke-width="6"/><path d="M376 163h16M386 126h16M364 108h12" stroke-width="6"/>
                    <path d="M327.500 184.500h28v6h-28zM366.500 193.500h38v6h-38z"/>
                    <path d="M313.500 205.500h144v51h-144z"/><path d="M315 207h13v48h-13z" fill="#fff"/><path d="M315 218h142" stroke-width="7" stroke-dasharray="10 2"/><path d="M315 209h140M330 229h125M330 237h125M330 245h125M330 253h125" stroke-width="4" stroke-dasharray="14 3"/><path d="M345 222v34M358 222v34M372 222v34M385 222v34M398 222v34M410 212v44M424 212v44M440 212v44" stroke-width="6"/>
                    <path d="M321.500 267.500h9v6h-9zM328.500 273v55M328 273.500h68v6h-68M328 280.500h103v6h-103M328 300.500h141v6h-141M328 312.500h132v6h-132M328 321.500h73v6M328 288.500h60"/><path d="M330 291h55M328 294h152M345 310h110" stroke-width="5"/>
                </svg>

                <!-- Sheet 4 -->
                <svg class="absolute left-[693px] top-[292px] w-[175px] h-[125px]" viewBox="0 0 525 375" fill="none" stroke="#fff" stroke-width="3" shape-rendering="crispEdges">
                    <path d="M22.500 19.500h471v333h-471zM49.500 28.500h432v312h-432zM49 322.500h432M148.500 322v18M256.500 322v18M334.500 322v18M352.500 322v18M379.500 322v18M412.500 322v18M436.500 322v18M457.500 322v18"/>
                    <path d="M261.500 328.500h58v6h-58zM337.500 328.500h9v6h-9zM385.500 328.500h18v6h-18zM442.500 328.500h9v6h-9zM463.500 328.500h15v6h-15z"/>
                    <path d="M72 63h213v144H72z" fill="url(#mesh)" stroke="none"/><path d="M71 64.500h213M71 206.500h213M70.500 51v162M283.500 51v162M66 127.500h5M283 121.500h5M163 61h18"/>
                    <path d="M162 43h45" stroke-width="8"/><path d="M369.500 37.500h44v9h-44z"/><path d="M95 223h16M255 250h21" stroke-width="8"/>
                    <path d="M333 196l136-132"/><path d="M386 118l64-64M392 120l30-30" stroke-dasharray="4 3"/>
                    <path d="M324 192l74-72M404 112l50-46" stroke="#0f0" stroke-width="11" stroke-dasharray="10 2"/><path d="M328 188l68-66M408 108l44-40" stroke="#000" stroke-width="3" stroke-dasharray="4 8"/>
                    <path d="M456 60h20M464 56v8" stroke="#0f0" stroke-width="5"/>
                    <path d="M403 118l22 22M356 176l24 24M455 72l20 20" stroke-width="7"/><path d="M402 112v14M426 55h16M446 66h12" stroke-width="7"/><path d="M450 62l8-15h22"/>
                    <path d="M323 126h36l12 10v8M346.500 193.500h22v6h-22z"/><path d="M310 196l16-2-8 28h-24l8-18z" fill="#fff"/><path d="M279 226h50" stroke-width="4"/>
                    <path d="M90 234h26v12h-26z" fill="#fff"/><path d="M84.500 247v46h39v-46zM93 234v58M104 234v58M114.500 234v58M57 270h26M124 267h16M98 290v12h30M104 302h24"/><path d="M88 250v40M112 250v40M100 256v30M100 246h20" stroke-width="6"/><path d="M70 268v6M130 260v20M108 300h18" stroke-width="7"/>
                    <path d="M151.500 255.500h21v36h-21zM172.500 255v46M158 258l6-5M156 292h16M176 275l10-6h32M186 274h30"/><path d="M186 274h28M192 297h18M249 267h10" stroke-width="6"/>
                    <circle cx="234" cy="284" r="15" fill="#fff"/><path d="M228 262h14v8h-14z" fill="#fff"/><path d="M217 272h34"/>
                    <path d="M273.500 265.500h20v33h-20zM282 258v8M262 272h52M305 265v33M255 270v8h8M262 298h50"/><path d="M276 270h14v24h-14z" fill="#fff"/><path d="M279 278.500h10M276 286.500h10" stroke="#000" stroke-dasharray="3 3"/><path d="M273 266h45" stroke-width="5"/>
                    <path d="M318.500 270v50"/><path d="M330 270v51M353 270v51" stroke-width="15"/><path d="M340.500 270v51"/><path d="M368 277v44M374 296v25" stroke-width="9"/>
                    <path d="M376 283h12M392 280h64M374 316h34M402 302h8M412 312h68" stroke-width="9" stroke-dasharray="18 3 10 2"/><path d="M390 299h14v15" stroke-width="6"/>
                </svg>

                <!-- Sheet 5 -->
                <svg class="absolute left-[880px] top-[292px] w-[175px] h-[125px]" viewBox="0 0 525 375" fill="none" stroke="#fff" stroke-width="3" shape-rendering="crispEdges">
                    <path d="M28.500 19.500h471v333h-471zM55.500 31.500h432v312h-432zM55 325.500h432M154.500 325v18M262.500 325v18M340.500 325v18M358.500 325v18M385.500 325v18M418.500 325v18M442.500 325v18M463.500 325v18"/>
                    <path d="M267.500 331.500h59v6h-59zM343.500 331.500h9v6h-9zM391.500 331.500h18v6h-18zM448.500 331.500h6v6h-6zM472 333h15"/>
                    <path d="M198.500 46.500h19v9h-19zM402.500 139.500h26v6h-26z"/>
                    <path d="M106.500 85.500h18v6h-18zM124 88h12M106 104h22l16 8M96 132h16l10-8"/><path d="M143 78l-6 22-14 26" stroke-width="10" stroke-dasharray="6 2"/><path d="M98 132h12M106 104h10" stroke-width="5"/>
                    <g stroke-width="4"><path d="M132 120h10l98 64M142 112l112 66M150 116l92 54M160 106h8M176 126l12-6h10M206 142l10-5h14M234 150h12v6"/></g><path d="M150 128l88 54" stroke-width="7" stroke-dasharray="6 3"/><path d="M180 120h16M210 137h20M176 148h12M250 174h6" stroke-width="5"/><path d="M236 176v10M242 172v12"/><path d="M156.500 103.500h9v5h-9z"/>
                    <path d="M114 168l122 66M118 162l116 66"/><path d="M120 168l112 62" stroke-width="6" stroke-dasharray="4 5"/><path d="M72 179h30" stroke-width="8"/><path d="M102 178l12-8M112 164h16M170 196h14M122 158v12" stroke-width="4"/>
                    <path d="M222 80h12l10-8h16M232 90l16-4 14 8M240 76l-10 14M248 78v22M240 98l14-6M256 86l6-8" stroke-width="4"/><path d="M260 75h21M242 90h14" stroke-width="8"/><path d="M227 76v12M236 86h20" stroke-width="6"/>
                    <path d="M286 108h20l16-14M290 96h26M306 90v30M292 116l24-8 10 6" stroke-width="4"/><path d="M320 104h26M292 110h30" stroke-width="8"/><path d="M288 104v10M296 94v6M314 92v8" stroke-width="6"/>
                    <path d="M367.500 157.500h93v87h-93z" fill="#fff"/><g stroke="#000"><path d="M370 163.500h14M395 163.500h14M428 163.500h30M428 172.500h30M428 178.500h30M370 181.500h24M370 208.500h24M428 211.500h32M428 223.500h12M448 223.500h10M428 235.500h32M368 238.500h14M394.500 219v18M385.500 187v10M415.500 190v10M424.500 205v8M391.500 171v6"/></g>
                    <path d="M414 285h9" stroke-width="6"/><path d="M421 288v14M426 290v16M438 290v18M450 290v18M462 292v14" stroke-width="10"/>
                </svg>
            </div>

            <!-- Layout tabs -->
            <nav class="flex h-4 shrink-0 pl-[2px] text-[14px] leading-[14px] whitespace-nowrap font-[Roboto,'Noto_Sans_CJK_SC',sans-serif]">
                <div class="flex items-center gap-2 pt-[2px]">
                    <button aria-label="第一页"><svg class="w-2 h-[7px] block" viewBox="0 0 8 7"><path d="M1 0h1v7H1zM7 0v7L3 3.500z" fill="#666"/></svg></button>
                    <button aria-label="上一页"><svg class="w-2 h-[7px] block" viewBox="0 0 8 7"><path d="M6 0v7L2 3.500z" fill="#666"/></svg></button>
                    <button aria-label="下一页"><svg class="w-2 h-[7px] block" viewBox="0 0 8 7"><path d="M3 0v7l4-3.500z" fill="#666"/></svg></button>
                    <button aria-label="最后页"><svg class="w-2 h-[7px] block" viewBox="0 0 8 7"><path d="M1 0v7l4-3.500zM7 0h1v7H7z" fill="#666"/></svg></button>
                </div>
                <svg class="w-[9px] h-4 ml-[7px]" viewBox="0 0 9 16"><path d="M0 0h9v16z" fill="#fff"/><path d="M0 0l8.500 16" stroke="#888"/></svg>
                <button class="w-7 pb-px font-bold bg-white border-b border-[#999]">模型</button>
                <svg class="w-[15px] h-4" viewBox="0 0 15 16"><path d="M0 0h11L3 15.500H0z" fill="#fff"/><path d="M0 15.500h3L11 0M7 8l4 7.500h4" fill="none" stroke="#999"/></svg>
                <button class="w-8 pb-px border-b border-[#999]">布局1</button>
                <svg class="w-4 h-4" viewBox="0 0 16 16"><path d="M0 15.500h4L12 0M8 8l4 7.500h4" fill="none" stroke="#999"/></svg>
                <button class="w-8 pb-px border-b border-[#999]">布局2</button>
                <svg class="w-3 h-4" viewBox="0 0 12 16"><path d="M0 15.500h4L12 0" fill="none" stroke="#999"/></svg>
            </nav>
        </section>
    </main>

    <footer class="shrink-0 h-[14px] -ml-[10px] border-t-[7px] border-[#ccc] overflow-hidden leading-5">命令行</footer>
</div>

</body>
</html>
